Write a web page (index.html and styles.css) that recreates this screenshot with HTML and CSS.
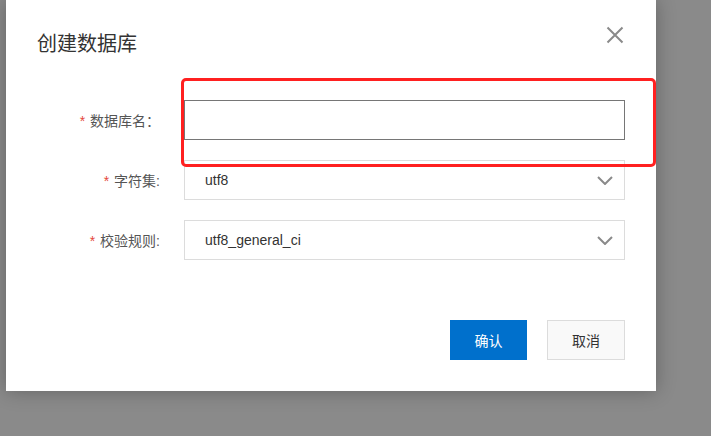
FILE: index.html
```html
<!DOCTYPE html>
<html lang="zh-CN">
<head>
<meta charset="utf-8">
<title>创建数据库</title>
<link rel="stylesheet" href="styles.css">
</head>
<body>
<div class="stage">
  <div class="dialog">
    <div class="header">
      <h1 class="title">创建数据库</h1>
      <button class="close" aria-label="关闭">
        <svg width="18" height="18" viewBox="0 0 18 18"><path d="M1.5 1.5 L16.5 16.5 M16.5 1.5 L1.5 16.5" stroke="#8a8a8a" stroke-width="2" fill="none"/></svg>
      </button>
    </div>
    <div class="form">
      <label class="label"><span class="req">*</span> 数据库名：</label>
      <input class="input focused" type="text">
      <label class="label"><span class="req">*</span> 字符集:</label>
      <div class="select"><span>utf8</span><svg class="chev" width="16" height="9" viewBox="0 0 16 9"><path d="M1 1 L8 8 L15 1" stroke="#8a8a8a" stroke-width="2" fill="none"/></svg></div>
      <label class="label"><span class="req">*</span> 校验规则:</label>
      <div class="select"><span>utf8_general_ci</span><svg class="chev" width="16" height="9" viewBox="0 0 16 9"><path d="M1 1 L8 8 L15 1" stroke="#8a8a8a" stroke-width="2" fill="none"/></svg></div>
    </div>
    <div class="footer">
      <button class="btn primary">确认</button>
      <button class="btn">取消</button>
    </div>
  </div>
  <div class="highlight"></div>
</div>
</body>
</html>
```
FILE: styles.css
```css
html, body {
  margin: 0;
  padding: 0;
  background: #8a8a8a;
  width: 711px;
  height: 436px;
  overflow: hidden;
  font-family: "Liberation Sans", "Noto Sans CJK SC", sans-serif;
}
.stage {
  position: relative;
  width: 711px;
  height: 436px;
}
.dialog {
  margin-left: 6px;
  width: 650px;
  height: 391px;
  background: #fff;
  box-shadow: 0 0 18px rgba(0, 0, 0, 0.28);
  box-sizing: border-box;
}
.header {
  display: flex;
  justify-content: space-between;
  align-items: flex-start;
  padding: 0 32px 0 31px;
}
.title {
  margin: 30px 0 0;
  font-size: 20px;
  line-height: 28px;
  font-weight: normal;
  color: #333;
}
.close {
  margin-top: 26px;
  padding: 0;
  border: 0;
  background: none;
  width: 18px;
  height: 18px;
  display: block;
}
.close svg { display: block; }
.form {
  margin-top: 42px;
  display: grid;
  grid-template-columns: 158px 441px;
  grid-auto-rows: 40px;
  column-gap: 20px;
  row-gap: 20px;
  align-items: center;
}
.label {
  text-align: right;
  padding-right: 4px;
  font-size: 14px;
  color: #555;
  white-space: nowrap;
}
.req {
  color: #e5473c;
  margin-right: 1px;
}
.input {
  width: 441px;
  height: 40px;
  box-sizing: border-box;
  border: 1px solid #767676;
  margin: 0;
  padding: 0 20px;
  outline: none;
  font-size: 14px;
}
.select {
  height: 40px;
  box-sizing: border-box;
  border: 1px solid #dcdcdc;
  display: flex;
  align-items: center;
  justify-content: space-between;
  padding: 0 11px 0 20px;
  font-size: 14px;
  color: #333;
}
.chev { display: block; }
.footer {
  margin-top: 60px;
  display: flex;
  justify-content: flex-end;
  gap: 20px;
  padding-right: 31px;
}
.btn {
  width: 78px;
  height: 40px;
  box-sizing: border-box;
  border: 1px solid #dcdcdc;
  background: #f9f9f9;
  color: #333;
  font-family: "Liberation Sans", "Noto Sans CJK SC", sans-serif;
  font-size: 14px;
  padding: 0;
}
.btn.primary {
  width: 77px;
  background: #0070cc;
  border-color: #0070cc;
  color: #fff;
}
.highlight {
  position: absolute;
  left: 181px;
  top: 78px;
  width: 475px;
  height: 89px;
  box-sizing: border-box;
  border: 3px solid #ff2020;
  border-radius: 5px;
}
```
